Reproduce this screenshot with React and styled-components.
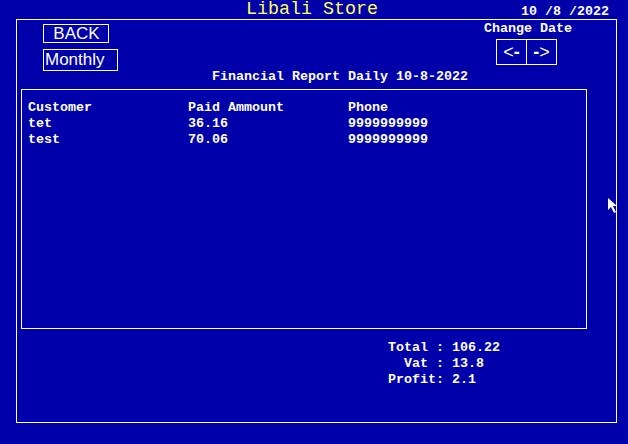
import React from "react";
import styled, { createGlobalStyle } from "styled-components";

const GlobalStyle = createGlobalStyle`
  html, body {
    margin: 0;
    padding: 0;
    background: #0000aa;
  }
  body {
    font-family: "Liberation Mono", monospace;
    color: #fff;
  }
`;

const Screen = styled.div`
  position: relative;
  width: 628px;
  height: 444px;
  background: #0000aa;
  overflow: hidden;
`;

const TopBar = styled.div`
  position: relative;
  height: 19px;
  display: flex;
  justify-content: center;
`;

const StoreTitle = styled.div`
  font-family: "Liberation Mono", monospace;
  font-size: 18.33px;
  line-height: 19px;
  color: #ffff55;
  margin-left: -4px;
`;

const DateStamp = styled.div`
  position: absolute;
  right: 19px;
  top: 5px;
  font-weight: bold;
  font-size: 13.33px;
  line-height: 14px;
`;

const Frame = styled.div`
  box-sizing: border-box;
  margin-left: 16px;
  width: 601px;
  height: 404px;
  border: 1px solid #fff;
  display: flex;
  flex-direction: column;
`;

const Header = styled.div`
  height: 69px;
  display: flex;
`;

const LeftCol = styled.div`
  width: 169px;
  padding: 4px 0 0 26px;
  display: flex;
  flex-direction: column;
  align-items: flex-start;
  gap: 6px;
`;

const TextButton = styled.div`
  box-sizing: border-box;
  width: ${(p) => p.$w}px;
  height: ${(p) => p.$h}px;
  border: 1px solid #fff;
  font-family: "Liberation Sans", sans-serif;
  font-size: 17px;
  line-height: ${(p) => p.$h - 2}px;
  text-align: ${(p) => p.$align};
  padding-left: 1px;
`;

const ReportTitle = styled.div`
  align-self: flex-end;
  margin-bottom: 4px;
  font-weight: bold;
  font-size: 13.33px;
  line-height: 16px;
  white-space: pre;
`;

const RightCol = styled.div`
  margin-left: auto;
  margin-right: 44px;
  display: flex;
  flex-direction: column;
  align-items: flex-start;
  padding-top: 1px;
`;

const Label = styled.div`
  font-weight: bold;
  font-size: 13.33px;
  line-height: 16px;
`;

const ArrowGroup = styled.div`
  display: flex;
  margin-top: 2px;
  margin-left: 12px;
  border: 1px solid #fff;
`;

const ArrowCell = styled.div`
  width: 29px;
  height: 24px;
  display: flex;
  align-items: center;
  justify-content: center;
  font-family: "Liberation Sans", sans-serif;
  font-size: 18px;
  & + & {
    border-left: 1px solid #fff;
  }
  b {
    font-weight: bold;
  }
`;

const TableBox = styled.div`
  box-sizing: border-box;
  margin-left: 4px;
  width: 566px;
  height: 240px;
  border: 1px solid #fff;
  padding: 10px 0 0 6px;
`;

const Row = styled.div`
  display: grid;
  grid-template-columns: 160px 160px 1fr;
  font-weight: bold;
  font-size: 13.33px;
  line-height: 16px;
`;

const Totals = styled.div`
  margin: 11px 0 0 371px;
  font-weight: bold;
  font-size: 13.33px;
  line-height: 16px;
  white-space: pre;
`;

const Cursor = styled.svg`
  position: absolute;
  left: 608px;
  top: 198px;
`;

const rows = [
  ["Customer", "Paid Ammount", "Phone"],
  ["tet", "36.16", "9999999999"],
  ["test", "70.06", "9999999999"],
];

export default function App() {
  return (
    <Screen>
      <GlobalStyle />
      <TopBar>
        <StoreTitle>Libali Store</StoreTitle>
        <DateStamp>10 /8 /2022</DateStamp>
      </TopBar>
      <Frame>
        <Header>
          <LeftCol>
            <TextButton $w={66} $h={19} $align="center">BACK</TextButton>
            <TextButton $w={75} $h={22} $align="left">Monthly</TextButton>
          </LeftCol>
          <ReportTitle>Financial Report Daily 10-8-2022</ReportTitle>
          <RightCol>
            <Label>Change Date</Label>
            <ArrowGroup>
              <ArrowCell>&lt;<b>-</b></ArrowCell>
              <ArrowCell><b>-</b>&gt;</ArrowCell>
            </ArrowGroup>
          </RightCol>
        </Header>
        <TableBox>
          {rows.map((r, i) => (
            <Row key={i}>
              {r.map((c, j) => (
                <span key={j}>{c}</span>
              ))}
            </Row>
          ))}
        </TableBox>
        <Totals>
          {"Total : 106.22\n  Vat : 13.8\nProfit: 2.1"}
        </Totals>
      </Frame>
      <Cursor width="10" height="16" viewBox="0 0 10 16">
        <path d="M0 0 L0 12 L3 9 L6 15 L8 14 L5 8 L9 8 Z" fill="#fff" />
      </Cursor>
    </Screen>
  );
}
